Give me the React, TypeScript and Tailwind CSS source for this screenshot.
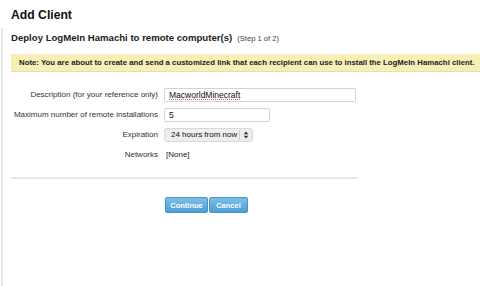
import React from "react";

export default function App() {
  const f = { fontFamily: '"Liberation Sans", Arial, sans-serif' };
  return (
    <div className="w-[480px] h-[286px] bg-white overflow-hidden relative text-[#222]" style={f}>
      <div className="absolute left-[1px] top-[28px] bottom-0 w-[2px] bg-[#e6e6e6]" />
      <div className="pl-[11px] pt-[7px]">
        <h1 className="text-[12.2px] font-bold leading-[16px] text-[#111]">Add Client</h1>
        <div className="mt-[9px] flex items-baseline gap-[5px] whitespace-nowrap">
          <span className="text-[9.6px] font-bold leading-[12px]">Deploy LogMeIn Hamachi to remote computer(s)</span>
          <span className="text-[7.6px] text-[#444]">(Step 1 of 2)</span>
        </div>
        <div className="mt-[10px] h-[18px] bg-[#f6efb6] border-b border-[#eadfa0] flex items-center pl-[8px] whitespace-nowrap">
          <span className="text-[7.8px] font-bold text-[#222]">Note: You are about to create and send a customized link that each recipient can use to install the LogMeIn Hamachi client.</span>
        </div>
        <div className="mt-[15px] flex flex-col gap-[5px] text-[8px] text-[#333] whitespace-nowrap">
          <div className="flex items-center h-[15px]">
            <div className="w-[153px] text-right pr-[6px]">Description (for your reference only)</div>
            <div className="w-[192px] h-[14px] border border-[#d4d4d4] rounded-[2px] flex items-center px-[4px] text-[#111] text-[8.5px]">
              <span className="underline decoration-dotted decoration-[#d66]">MacworldMinecraft</span>
            </div>
          </div>
          <div className="flex items-center h-[15px]">
            <div className="w-[153px] text-right pr-[6px]">Maximum number of remote installations</div>
            <div className="w-[106px] h-[14px] border border-[#d4d4d4] rounded-[2px] flex items-center px-[4px] text-[#111] text-[8.5px]">5</div>
          </div>
          <div className="flex items-center h-[15px]">
            <div className="w-[153px] text-right pr-[6px]">Expiration</div>
            <div className="w-[89px] h-[14px] border border-[#d8d8d8] bg-[#eeeeee] rounded-[3px] flex items-center pl-[6px] text-[#111] text-[8px]">
              <span className="flex-1">24 hours from now</span>
              <span className="w-px h-[10px] bg-[#ccc]" />
              <svg width="10" height="10" viewBox="0 0 10 10" className="mx-[1px]">
                <path d="M5 1.5 L7.3 4.2 H2.7 Z" fill="#333" />
                <path d="M5 8.5 L7.3 5.8 H2.7 Z" fill="#333" />
              </svg>
            </div>
          </div>
          <div className="flex items-center h-[15px]">
            <div className="w-[153px] text-right pr-[6px]">Networks</div>
            <div className="pl-[2px] text-[#222]">[None]</div>
          </div>
        </div>
        <div className="mt-[15px] w-[347px] h-[2px] bg-[#e8e8e8]" />
        <div className="mt-[18px] pl-[154px] flex gap-[1px]">
          <button className="h-[16px] w-[43px] rounded-[2px] border border-[#4a95c8] bg-gradient-to-b from-[#7cc0e8] to-[#4d9ed6] text-white text-[7.5px] font-bold">Continue</button>
          <button className="h-[16px] w-[39px] rounded-[2px] border border-[#4a95c8] bg-gradient-to-b from-[#7cc0e8] to-[#4d9ed6] text-white text-[7.5px] font-bold">Cancel</button>
        </div>
      </div>
    </div>
  );
}
